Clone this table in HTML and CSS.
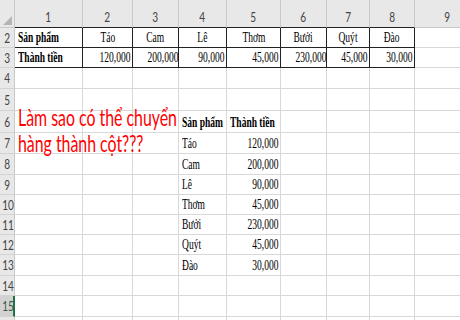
FILE: index.html
```html
<!DOCTYPE html>
<html lang="vi">
<head>
<meta charset="utf-8">
<title>Sheet</title>
<link rel="stylesheet" href="styles.css">
</head>
<body>
<div class="sheet">
  <table class="grid">
    <colgroup>
      <col class="w-rh"><col class="w1"><col class="w2"><col class="w3"><col class="w4"><col class="w5"><col class="w6"><col class="w7"><col class="w8"><col class="w9">
    </colgroup>
    <tr class="r-head">
      <th class="corner"><span class="tri"></span></th>
      <th class="ch tb"><span class="n">1</span></th>
      <th class="ch tb"><span class="n">2</span></th>
      <th class="ch tb"><span class="n">3</span></th>
      <th class="ch tb"><span class="n">4</span></th>
      <th class="ch tb"><span class="n">5</span></th>
      <th class="ch tb"><span class="n">6</span></th>
      <th class="ch tb"><span class="n">7</span></th>
      <th class="ch tb"><span class="n">8</span></th>
      <th class="ch"><span class="n">9</span></th>
    </tr>
    <tr class="r20">
      <th class="rh"><span class="n">2</span></th>
      <td class="b l"><span class="t bold">Sản phẩm</span></td>
      <td class="b c"><span class="t">Táo</span></td>
      <td class="b c"><span class="t">Cam</span></td>
      <td class="b c"><span class="t">Lê</span></td>
      <td class="b c"><span class="t">Thơm</span></td>
      <td class="b c"><span class="t">Bưởi</span></td>
      <td class="b c"><span class="t">Quýt</span></td>
      <td class="b c"><span class="t">Đào</span></td>
      <td></td>
    </tr>
    <tr class="r20">
      <th class="rh"><span class="n">3</span></th>
      <td class="b l"><span class="t bold">Thành tiền</span></td>
      <td class="b r"><span class="t">120,000</span></td>
      <td class="b r"><span class="t">200,000</span></td>
      <td class="b r"><span class="t">90,000</span></td>
      <td class="b r"><span class="t">45,000</span></td>
      <td class="b r"><span class="t">230,000</span></td>
      <td class="b r"><span class="t">45,000</span></td>
      <td class="b r"><span class="t">30,000</span></td>
      <td></td>
    </tr>
    <tr class="r21">
      <th class="rh"><span class="n">4</span></th>
      <td></td><td></td><td></td><td></td><td></td><td></td><td></td><td></td><td></td>
    </tr>
    <tr class="r22">
      <th class="rh"><span class="n">5</span></th>
      <td></td><td></td><td></td><td></td><td></td><td></td><td></td><td></td><td></td>
    </tr>
    <tr class="r22">
      <th class="rh"><span class="n">6</span></th>
      <td></td><td></td><td></td>
      <td class="l"><span class="t bold">Sản phẩm</span></td>
      <td class="l"><span class="t bold">Thành tiền</span></td>
      <td></td><td></td><td></td><td></td>
    </tr>
    <tr class="r21">
      <th class="rh"><span class="n">7</span></th>
      <td></td><td></td><td></td>
      <td class="l"><span class="t">Táo</span></td>
      <td class="r"><span class="t">120,000</span></td>
      <td></td><td></td><td></td><td></td>
    </tr>
    <tr class="r21">
      <th class="rh"><span class="n">8</span></th>
      <td></td><td></td><td></td>
      <td class="l"><span class="t">Cam</span></td>
      <td class="r"><span class="t">200,000</span></td>
      <td></td><td></td><td></td><td></td>
    </tr>
    <tr class="r20">
      <th class="rh"><span class="n">9</span></th>
      <td></td><td></td><td></td>
      <td class="l"><span class="t">Lê</span></td>
      <td class="r"><span class="t">90,000</span></td>
      <td></td><td></td><td></td><td></td>
    </tr>
    <tr class="r20">
      <th class="rh"><span class="n">10</span></th>
      <td></td><td></td><td></td>
      <td class="l"><span class="t">Thơm</span></td>
      <td class="r"><span class="t">45,000</span></td>
      <td></td><td></td><td></td><td></td>
    </tr>
    <tr class="r20">
      <th class="rh"><span class="n">11</span></th>
      <td></td><td></td><td></td>
      <td class="l"><span class="t">Bưởi</span></td>
      <td class="r"><span class="t">230,000</span></td>
      <td></td><td></td><td></td><td></td>
    </tr>
    <tr class="r20">
      <th class="rh"><span class="n">12</span></th>
      <td></td><td></td><td></td>
      <td class="l"><span class="t">Quýt</span></td>
      <td class="r"><span class="t">45,000</span></td>
      <td></td><td></td><td></td><td></td>
    </tr>
    <tr class="r21">
      <th class="rh"><span class="n">13</span></th>
      <td></td><td></td><td></td>
      <td class="l"><span class="t">Đào</span></td>
      <td class="r"><span class="t">30,000</span></td>
      <td></td><td></td><td></td><td></td>
    </tr>
    <tr class="r20">
      <th class="rh"><span class="n">14</span></th>
      <td></td><td></td><td></td><td></td><td></td><td></td><td></td><td></td><td></td>
    </tr>
    <tr class="r21">
      <th class="rh sel"><span class="n">15</span></th>
      <td></td><td></td><td></td><td></td><td></td><td></td><td></td><td></td><td></td>
    </tr>
    <tr class="r20">
      <th class="rh last"></th>
      <td></td><td></td><td></td><td></td><td></td><td></td><td></td><td></td><td></td>
    </tr>
  </table>
  <div class="note">Làm sao có thể chuyển<br>hàng thành cột???</div>
</div>
</body>
</html>
```

FILE: styles.css
```css
html, body {
  margin: 0;
  padding: 0;
  background: #ffffff;
  overflow: hidden;
}

.sheet {
  position: relative;
  width: 460px;
  height: 320px;
  overflow: hidden;
}

.grid {
  border-collapse: separate;
  border-spacing: 0;
  table-layout: fixed;
  width: 480px;
}

.w-rh { width: 15px; }
.w1 { width: 68px; }
.w2 { width: 50px; }
.w3 { width: 46px; }
.w4 { width: 48px; }
.w5 { width: 54px; }
.w6 { width: 46px; }
.w7 { width: 43px; }
.w8 { width: 45px; }
.w9 { width: 65px; }

.r-head { height: 28px; }
.r20 { height: 20px; }
.r21 { height: 21px; }
.r22 { height: 22px; }

td, th {
  padding: 0;
  box-sizing: border-box;
  border-right: 1px solid #d8d8d8;
  border-bottom: 1px solid #d8d8d8;
  vertical-align: bottom;
  overflow: visible;
  white-space: nowrap;
  font-weight: normal;
  line-height: 1;
}

/* headers */
.r-head th {
  background: #e8e8e8;
  border-right: 1px solid #c9c9c9;
  border-bottom: 1px solid #c9c9c9;
  vertical-align: bottom;
  padding-bottom: 2px;
  text-align: center;
}

.r-head th.tb {
  border-bottom-color: #222;
}

.corner {
  position: relative;
}

.tri {
  position: absolute;
  right: 2px;
  bottom: 2px;
  width: 0;
  height: 0;
  border-left: 9px solid transparent;
  border-bottom: 9px solid #b5b5b5;
}

th.rh {
  background: #e8e8e8;
  border-right: 1px solid #c9c9c9;
  border-bottom: 1px solid #d3d3d3;
  text-align: center;
  vertical-align: middle;
}

th.rh.sel {
  background: #d2d2d2;
  border-right: 2px solid #217346;
}

.n {
  display: inline-block;
  font-family: Lato, "Open Sans", sans-serif;
  font-size: 14px;
  color: #444;
  transform: scaleX(0.72);
  transform-origin: center;
}

.sel .n {
  color: #3a5a48;
}

/* bordered table cells */
td.b {
  border-right-color: #222;
  border-bottom-color: #222;
}

td.l { text-align: left; padding-left: 3px; padding-bottom: 2px; }
td.c { text-align: center; padding-bottom: 2px; }
td.r { text-align: right; padding-right: 2px; padding-bottom: 2px; }

.t {
  display: inline-block;
  font-family: "Liberation Serif", "Times New Roman", serif;
  font-size: 14px;
  color: #000;
  transform: scaleX(0.68);
}

.l .t { transform-origin: left center; }
.c .t { transform-origin: center center; }
.r .t { transform-origin: right center; }

.bold { font-weight: bold; }

.note {
  position: absolute;
  left: 18px;
  top: 104px;
  font-family: Lato, "Open Sans", sans-serif;
  font-size: 23px;
  line-height: 26px;
  color: #ff0000;
  white-space: nowrap;
  transform: scaleX(0.69);
  transform-origin: left top;
}
```
